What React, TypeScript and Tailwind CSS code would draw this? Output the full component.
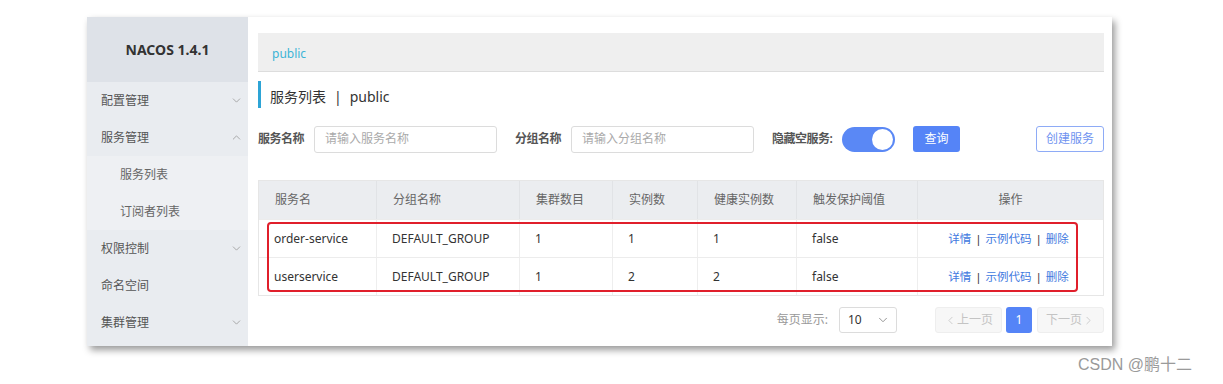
import React from 'react';
import { ChevronDown, ChevronUp, ChevronLeft, ChevronRight } from 'lucide-react';

const font = { fontFamily: '"Noto Sans", "Noto Sans CJK SC", sans-serif' };

const menu = [
  { label: '配置管理', icon: 'down' },
  { label: '服务管理', icon: 'up' },
  { label: '服务列表', sub: true },
  { label: '订阅者列表', sub: true },
  { label: '权限控制', icon: 'down' },
  { label: '命名空间' },
  { label: '集群管理', icon: 'down' }
];

const columns = [
  { title: '服务名', w: 'w-[118px]' },
  { title: '分组名称', w: 'w-[143px]' },
  { title: '集群数目', w: 'w-[93px]' },
  { title: '实例数', w: 'w-[85px]' },
  { title: '健康实例数', w: 'w-[99px]' },
  { title: '触发保护阈值', w: 'w-[121px]' }
];

const rows = [
  ['order-service', 'DEFAULT_GROUP', '1', '1', '1', 'false'],
  ['userservice', 'DEFAULT_GROUP', '1', '2', '2', 'false']
];

const Sidebar = () => (
  <div className="w-[161px] shrink-0 bg-[#e9ecf0] flex flex-col">
    <div className="h-[65px] bg-[#dee2e8] flex items-center justify-center text-[14px] font-bold text-[#333]">
      NACOS 1.4.1
    </div>
    {menu.map((m) => (
      <div
        key={m.label}
        className={`h-[37px] flex items-center justify-between pr-[5px] text-[12px] ${
          m.sub ? 'pl-[33px] bg-[#eef0f3] text-[#666]' : 'pl-[14px] text-[#555]'
        }`}
      >
        <span>{m.label}</span>
        {m.icon === 'down' && <ChevronDown className="w-[13px] h-[13px] text-[#999]" strokeWidth={1.5} />}
        {m.icon === 'up' && <ChevronUp className="w-[13px] h-[13px] text-[#999]" strokeWidth={1.5} />}
      </div>
    ))}
  </div>
);

const Filters = () => (
  <div className="mt-[18px] flex items-center h-[26px] text-[12px]">
    <span className="w-[56px] whitespace-nowrap font-semibold text-[#555] tracking-[-0.5px]">服务名称</span>
    <div className="w-[183px] h-[27px] border border-[#dcdcdc] rounded-[3px] flex items-center px-[10px] text-[#aaa]">
      请输入服务名称
    </div>
    <span className="ml-[18px] w-[56px] whitespace-nowrap font-semibold text-[#555] tracking-[-0.5px]">分组名称</span>
    <div className="w-[183px] h-[27px] border border-[#dcdcdc] rounded-[3px] flex items-center px-[10px] text-[#aaa]">
      请输入分组名称
    </div>
    <span className="ml-[18px] w-[70px] whitespace-nowrap font-semibold text-[#555] tracking-[-0.5px]">隐藏空服务:</span>
    <div className="w-[53px] h-[25px] rounded-full bg-[#5a88f5] flex items-center justify-end pr-[2px]">
      <div className="w-[21px] h-[21px] rounded-full bg-white" />
    </div>
    <div className="ml-[18px] w-[47px] h-[26px] rounded-[3px] bg-[#5584f7] text-white flex items-center justify-center">
      查询
    </div>
    <div className="ml-auto w-[68px] h-[26px] rounded-[3px] border border-[#8eabf6] text-[#6f93f0] flex items-center justify-center">
      创建服务
    </div>
  </div>
);

const Table = () => (
  <div className="relative mt-[28px] border border-[#e6e6e6] text-[12px]">
    <div className="flex h-[38px] bg-[#ebedf0] text-[#666]">
      {columns.map((c) => (
        <div key={c.title} className={`${c.w} border-r border-[#e1e3e6] flex items-center pl-[16px]`}>
          {c.title}
        </div>
      ))}
      <div className="flex-1 flex items-center justify-center">操作</div>
    </div>
    {rows.map((r, i) => (
      <div key={i} className="flex h-[38px] border-t border-[#ececec] text-[#333]">
        {columns.map((c, j) => (
          <div key={c.title} className={`${c.w} border-r border-[#eeeeee] flex items-center pl-[15px]`}>
            {r[j]}
          </div>
        ))}
        <div className="flex-1 flex items-center justify-center gap-[4px] pr-[4px] text-[11.5px] text-[#3f79e0]">
          <span>详情</span>
          <span className="text-[#333]">|</span>
          <span>示例代码</span>
          <span className="text-[#333]">|</span>
          <span>删除</span>
        </div>
      </div>
    ))}
    <div className="absolute left-[8px] top-[41px] w-[811px] h-[70px] border-2 border-[#e01f2b] rounded-[4px]" />
  </div>
);

const Pagination = () => (
  <div className="mt-[11px] flex items-center justify-end text-[12px]">
    <span className="text-[#999]">每页显示:</span>
    <div className="ml-[11px] w-[58px] h-[26px] border border-[#dcdcdc] rounded-[3px] flex items-center justify-between pl-[8px] pr-[6px] text-[#333]">
      <span>10</span>
      <ChevronDown className="w-[14px] h-[14px] text-[#888]" strokeWidth={1.5} />
    </div>
    <div className="ml-[38px] w-[67px] h-[26px] border border-[#eeeeee] bg-[#f7f7f7] rounded-[3px] flex items-center justify-center text-[#c4c4c4]">
      <ChevronLeft className="w-[13px] h-[13px]" strokeWidth={1.5} />
      <span>上一页</span>
    </div>
    <div className="ml-[4px] w-[26px] h-[26px] bg-[#5584f7] rounded-[3px] flex items-center justify-center text-white">1</div>
    <div className="ml-[5px] w-[67px] h-[26px] border border-[#eeeeee] bg-[#f7f7f7] rounded-[3px] flex items-center justify-center text-[#c4c4c4]">
      <span>下一页</span>
      <ChevronRight className="w-[13px] h-[13px]" strokeWidth={1.5} />
    </div>
  </div>
);

export default function App() {
  return (
    <div className="w-[1223px] h-[384px] bg-white relative overflow-hidden" style={font}>
      <div className="ml-[87px] mt-[17px] w-[1025px] h-[329px] flex bg-white shadow-[3px_4px_7px_rgba(0,0,0,0.4)]">
        <Sidebar />
        <div className="flex-1 pl-[10px] pr-[8px] flex flex-col">
          <div className="mt-[16px] h-[39px] bg-[#efefef] border-b border-[#dddddd] flex items-center pl-[14px] pt-[3px] text-[12px] text-[#3cb4d6]">
            public
          </div>
          <div className="mt-[9px] h-[27px] border-l-[3px] border-[#2da4d6] flex items-center pl-[9px] pt-[4px] text-[14px] text-[#333]">
            服务列表 <span className="mx-[8px]">|</span> public
          </div>
          <Filters />
          <Table />
          <Pagination />
        </div>
      </div>
      <div className="absolute left-[1078px] top-[353px] text-[16px] text-[#9a9a9a]" style={{ fontFamily: '"Liberation Sans", "Noto Sans CJK SC", sans-serif' }}>
        CSDN @鹏十二
      </div>
    </div>
  );
}
